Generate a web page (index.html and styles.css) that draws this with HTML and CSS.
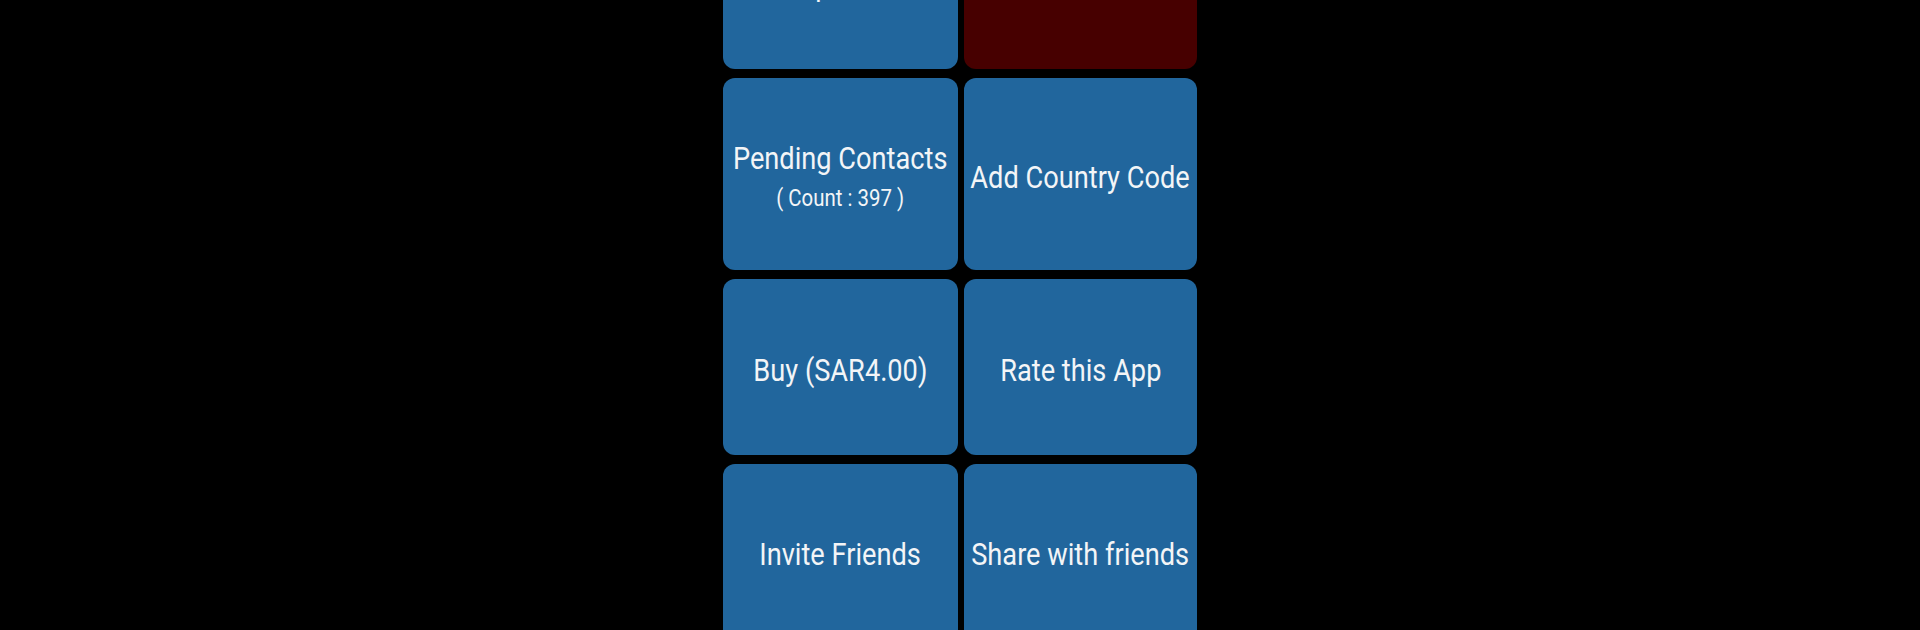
FILE: index.html
```html
<!DOCTYPE html>
<html lang="en">
<head>
<meta charset="utf-8">
<title>Menu</title>
<link rel="stylesheet" href="styles.css">
</head>
<body>
<main class="menu">
  <div class="btn blue row1 first"><span class="label">Update</span></div>
  <div class="btn red row1"></div>

  <div class="btn blue row2 pending">
    <span class="label">Pending Contacts</span>
    <span class="label sub">( Count : 397 )</span>
  </div>
  <div class="btn blue row2"><span class="label">Add Country Code</span></div>

  <div class="btn blue row3"><span class="label">Buy (SAR4.00)</span></div>
  <div class="btn blue row3"><span class="label">Rate this App</span></div>

  <div class="btn blue row4 last"><span class="label">Invite Friends</span></div>
  <div class="btn blue row4 last"><span class="label">Share with friends</span></div>
</main>
</body>
</html>
```
FILE: styles.css
```css
html, body {
  margin: 0;
  padding: 0;
  background: #000;
  height: 630px;
  overflow: hidden;
}

.menu {
  display: grid;
  grid-template-columns: 235px 233px;
  grid-template-rows: 172px 192px 176px 178px;
  column-gap: 6px;
  row-gap: 9px;
  justify-content: center;
  margin-top: -103px;
  font-family: Roboto, "Noto Sans", sans-serif;
  color: #f3f5f7;
}

.btn {
  border-radius: 12px;
  display: flex;
  flex-direction: column;
  align-items: center;
  justify-content: center;
  overflow: hidden;
  box-sizing: border-box;
  padding-top: 5px;
}

.blue { background: #21669d; }
.red { background: #470000; }

.first { padding-top: 4px; }
.last { padding-top: 1px; }

.label {
  display: inline-block;
  font-size: 32px;
  line-height: 36px;
  white-space: nowrap;
  transform: scaleX(0.85);
}

.pending { padding-top: 4px; }

.sub {
  font-size: 24px;
  line-height: 28px;
  margin-top: 8px;
}
```
